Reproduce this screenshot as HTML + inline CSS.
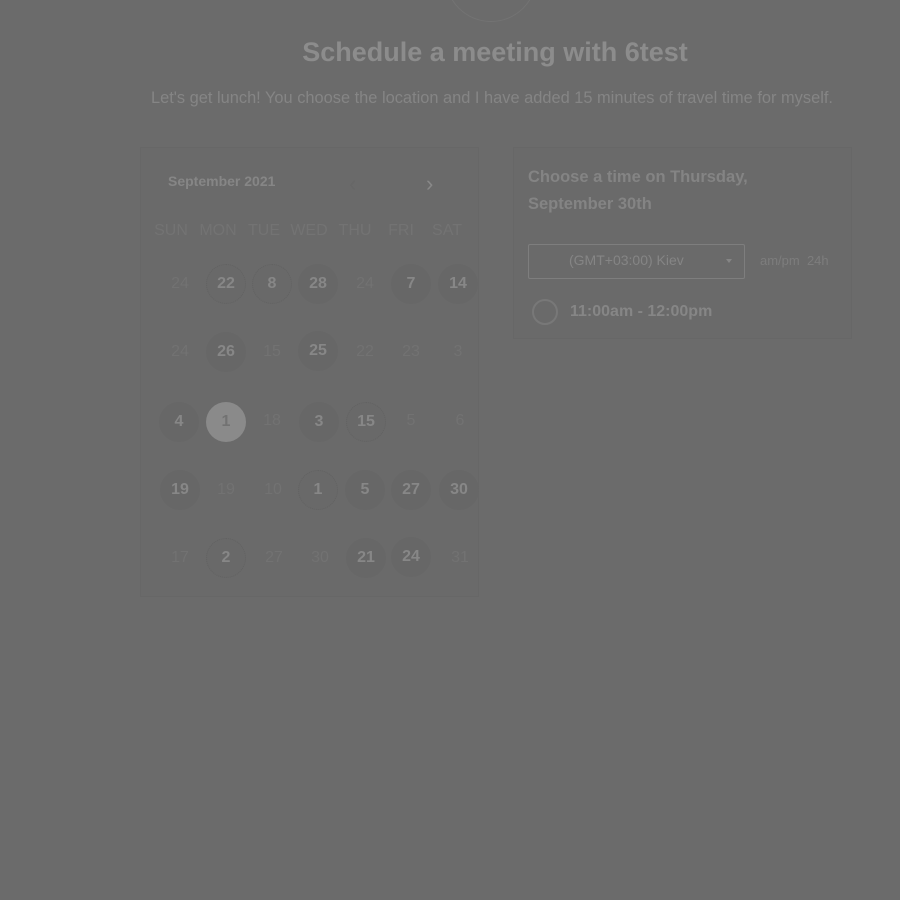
<!DOCTYPE html>
<html><head><meta charset="utf-8"><style>
body{margin:0;width:900px;height:900px;background:#6b6b6b;font-family:"Liberation Sans",sans-serif;position:relative;overflow:hidden}
.a{position:absolute}
.logo{left:445px;top:-70px;width:90px;height:90px;border-radius:50%;border:1px solid #737373}
h1{position:absolute;top:37px;left:0;width:990px;text-align:center;margin:0;font-size:27px;font-weight:bold;color:#8c8c8c}
.sub{top:89px;left:151px;font-size:16.4px;color:#858585;white-space:nowrap}
.p{border:1px solid #676767;background:#6a6a6a}
.d{position:absolute;width:40px;height:40px;margin:-20px 0 0 -20px;border-radius:50%;text-align:center;line-height:40px;font-size:16px;font-weight:bold;color:#878787}
.c{background:#676767}
.f{color:#727272;font-weight:normal}
.t{border:1px dotted #626262;background:#696969;width:38px;height:38px;line-height:38px}
.s{background:#8a8a8a;color:#727272}
.w{position:absolute;top:222px;font-size:16px;color:#737373;width:46px;text-align:center;margin-left:-23px}
</style></head><body>
<div class="a logo"></div>
<h1>Schedule a meeting with 6test</h1>
<div class="a sub">Let's get lunch! You choose the location and I have added 15 minutes of travel time for myself.</div>
<div class="a p" style="left:140px;top:147px;width:337px;height:448px"></div>
<div class="a" style="left:168px;top:173px;font-size:14px;font-weight:bold;color:#868686">September 2021</div>
<div class="a" style="left:349px;top:171px;font-size:22px;color:#676767">‹</div>
<div class="a" style="left:426px;top:171px;font-size:22px;color:#888">›</div>
<div class="w" style="left:171px">SUN</div><div class="w" style="left:218px">MON</div><div class="w" style="left:264px">TUE</div><div class="w" style="left:309px">WED</div><div class="w" style="left:355px">THU</div><div class="w" style="left:401px">FRI</div><div class="w" style="left:447px">SAT</div>
<div class="d f" style="left:180px;top:284px">24</div><div class="d t" style="left:226px;top:284px">22</div><div class="d t" style="left:272px;top:284px">8</div><div class="d c" style="left:318px;top:284px">28</div><div class="d f" style="left:365px;top:284px">24</div><div class="d c" style="left:411px;top:284px">7</div><div class="d c" style="left:458px;top:284px">14</div>
<div class="d f" style="left:180px;top:352px">24</div><div class="d c" style="left:226px;top:352px">26</div><div class="d f" style="left:272px;top:352px">15</div><div class="d c" style="left:318px;top:351px">25</div><div class="d f" style="left:365px;top:352px">22</div><div class="d f" style="left:411px;top:352px">23</div><div class="d f" style="left:458px;top:352px">3</div>
<div class="d c" style="left:179px;top:422px">4</div><div class="d s" style="left:226px;top:422px">1</div><div class="d f" style="left:272px;top:421px">18</div><div class="d c" style="left:319px;top:422px">3</div><div class="d t" style="left:366px;top:422px">15</div><div class="d f" style="left:411px;top:421px">5</div><div class="d f" style="left:460px;top:421px">6</div>
<div class="d c" style="left:180px;top:490px">19</div><div class="d f" style="left:226px;top:490px">19</div><div class="d f" style="left:273px;top:490px">10</div><div class="d t" style="left:318px;top:490px">1</div><div class="d c" style="left:365px;top:490px">5</div><div class="d c" style="left:411px;top:490px">27</div><div class="d c" style="left:459px;top:490px">30</div>
<div class="d f" style="left:180px;top:558px">17</div><div class="d t" style="left:226px;top:558px">2</div><div class="d f" style="left:274px;top:558px">27</div><div class="d f" style="left:320px;top:558px">30</div><div class="d c" style="left:366px;top:558px">21</div><div class="d c" style="left:411px;top:557px">24</div><div class="d f" style="left:460px;top:558px">31</div>
<div class="a p" style="left:513px;top:147px;width:337px;height:190px"></div>
<div class="a" style="left:528px;top:164px;font-size:16.5px;font-weight:bold;color:#848484;line-height:27px">Choose a time on Thursday,<br>September 30th</div>
<div class="a" style="left:528px;top:244px;width:215px;height:33px;border:1px solid #7e7e7e;border-radius:2px"></div>
<div class="a" style="left:569px;top:252px;font-size:14px;color:#858585">(GMT+03:00) Kiev</div>
<div class="a" style="left:726px;top:259px;border:3px solid transparent;border-top:4px solid #858585"></div>
<div class="a" style="left:760px;top:253px;font-size:13px;color:#7d7d7d">am/pm&nbsp; 24h</div>
<div class="a" style="left:532px;top:299px;width:22px;height:22px;border:2px solid #787878;border-radius:50%"></div>
<div class="a" style="left:570px;top:303px;font-size:16px;font-weight:bold;color:#868686">11:00am - 12:00pm</div>
</body></html>
